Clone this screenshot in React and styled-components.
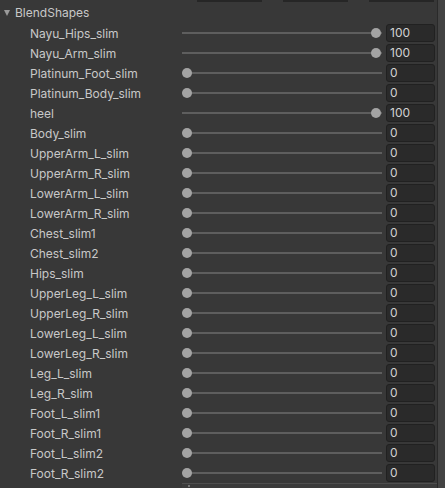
import React from "react";
import styled, { createGlobalStyle } from "styled-components";

const Global = createGlobalStyle`
  html, body { margin: 0; padding: 0; background: #383838; }
  body { font-family: Inter, "Noto Sans", "Liberation Sans", sans-serif; }
`;

const Page = styled.div`
  display: flex;
  width: 445px;
  height: 488px;
  overflow: hidden;
  background: #383838;
`;

const Main = styled.div`
  flex: 1;
  display: flex;
  flex-direction: column;
  min-width: 0;
  overflow: hidden;
  & > * { flex-shrink: 0; }
`;

const Scrollbar = styled.div`
  width: 7px;
  border-left: 1px solid #2a2a2a;
  background: #434343;
`;

const TopStrip = styled.div`
  display: flex;
  height: 2px;
  padding-left: 197px;
  gap: 21px;
`;

const TopButton = styled.div`
  width: 65px;
  height: 2px;
  background: #262626;
`;

const Header = styled.div`
  display: flex;
  align-items: center;
  height: 20px;
  padding-left: 4px;
  gap: 5px;
  color: #c8c8c8;
  font-size: 12px;
`;

const Triangle = styled.span`
  width: 0;
  height: 0;
  border-left: 3.5px solid transparent;
  border-right: 3.5px solid transparent;
  border-top: 6px solid #9a9a9a;
  margin-top: 1px;
`;

const List = styled.div`
  display: flex;
  flex-direction: column;
  padding-top: 1px;
`;

const Row = styled.div`
  display: grid;
  grid-template-columns: 152px 200px 49px;
  align-items: center;
  height: 20px;
  padding-left: 30px;
`;

const Label = styled.span`
  color: #c8c8c8;
  font-size: 12px;
  white-space: nowrap;
`;

const Track = styled.div`
  position: relative;
  height: 10px;
  display: flex;
  align-items: center;
  &::before {
    content: "";
    flex: 1;
    height: 2px;
    background: #5e5e5e;
  }
`;

const Thumb = styled.div`
  position: absolute;
  top: 0;
  width: 10px;
  height: 10px;
  border-radius: 50%;
  background: #a3a3a3;
`;

const Field = styled.div`
  box-sizing: border-box;
  height: 18px;
  margin-left: 4px;
  width: 49px;
  background: #2a2a2a;
  border: 1px solid #212121;
  border-radius: 3px;
  color: #d2d2d2;
  font-size: 12px;
  line-height: 16px;
  padding-left: 3px;
`;

const Footer = styled.div`
  margin-left: 182px;
  height: 6px;
  border-top: 1px solid #4e4e4e;
  background: #3b3b3b;
  position: relative;
`;

const FooterDot = styled.span`
  position: absolute;
  left: 6px;
  top: 1px;
  width: 2px;
  height: 2px;
  background: #777;
`;

const shapes = [
  ["Nayu_Hips_slim", 100],
  ["Nayu_Arm_slim", 100],
  ["Platinum_Foot_slim", 0],
  ["Platinum_Body_slim", 0],
  ["heel", 100],
  ["Body_slim", 0],
  ["UpperArm_L_slim", 0],
  ["UpperArm_R_slim", 0],
  ["LowerArm_L_slim", 0],
  ["LowerArm_R_slim", 0],
  ["Chest_slim1", 0],
  ["Chest_slim2", 0],
  ["Hips_slim", 0],
  ["UpperLeg_L_slim", 0],
  ["UpperLeg_R_slim", 0],
  ["LowerLeg_L_slim", 0],
  ["LowerLeg_R_slim", 0],
  ["Leg_L_slim", 0],
  ["Leg_R_slim", 0],
  ["Foot_L_slim1", 0],
  ["Foot_R_slim1", 0],
  ["Foot_L_slim2", 0],
  ["Foot_R_slim2", 0],
];

export default function App() {
  return (
    <>
      <Global />
      <Page>
        <Main>
          <TopStrip>
            <TopButton />
            <TopButton />
            <TopButton />
          </TopStrip>
          <Header>
            <Triangle />
            <span>BlendShapes</span>
          </Header>
          <List>
            {shapes.map(([name, v]) => (
              <Row key={name}>
                <Label>{name}</Label>
                <Track>
                  <Thumb style={{ left: `${(v / 100) * 189}px` }} />
                </Track>
                <Field>{v}</Field>
              </Row>
            ))}
          </List>
          <Footer>
            <FooterDot />
          </Footer>
        </Main>
        <Scrollbar />
      </Page>
    </>
  );
}
